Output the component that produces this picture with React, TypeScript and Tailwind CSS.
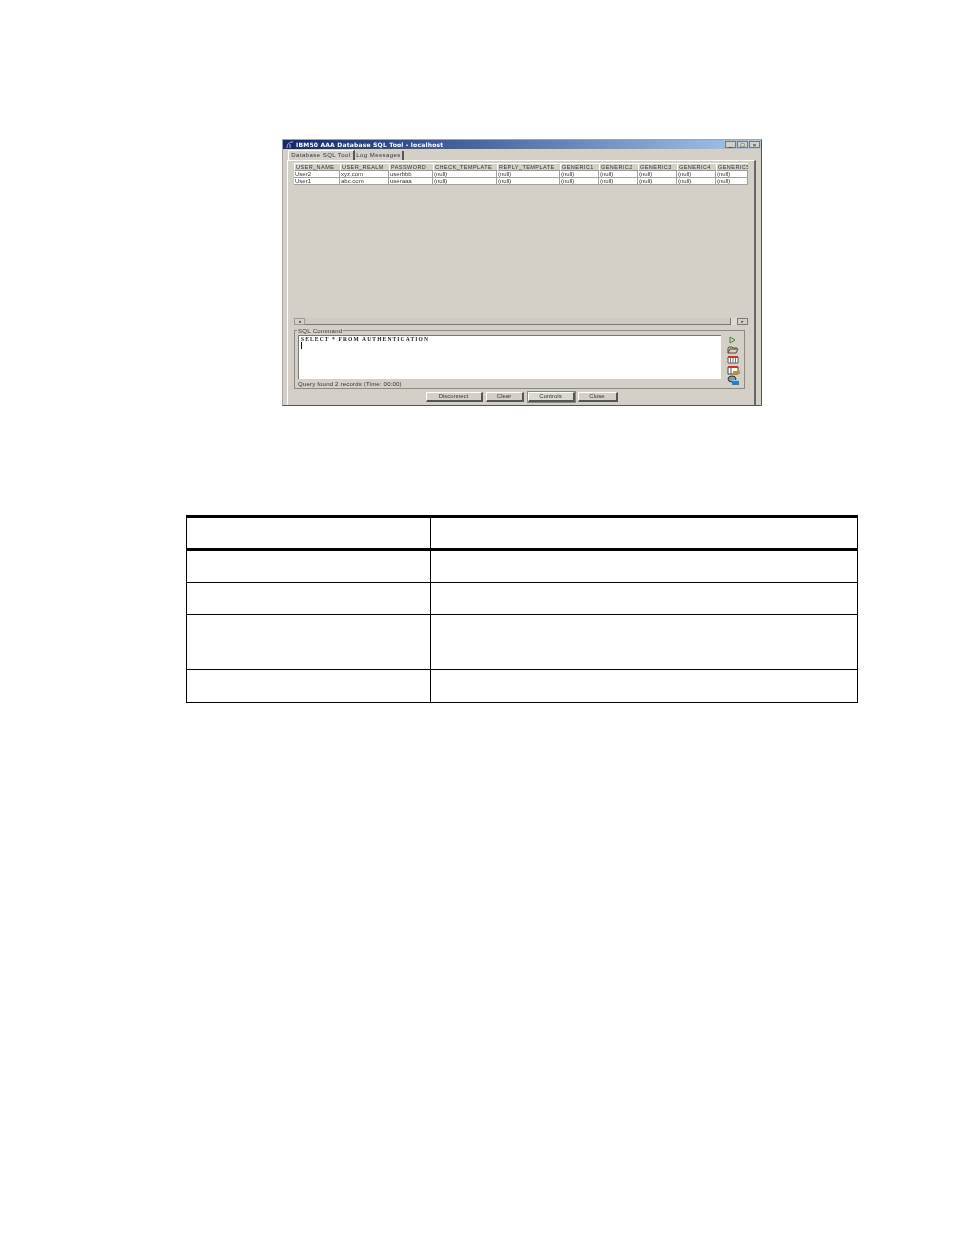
const columns = [
  { name: 'USER_NAME', width: 'w-[46px]', cells: ['User2', 'User1'] },
  { name: 'USER_REALM', width: 'w-[49px]', cells: ['xyz.com', 'abc.com'] },
  { name: 'PASSWORD', width: 'w-[44px]', cells: ['userbbb', 'useraaa'] },
  { name: 'CHECK_TEMPLATE', width: 'w-[64px]', cells: ['(null)', '(null)'] },
  { name: 'REPLY_TEMPLATE', width: 'w-[63px]', cells: ['(null)', '(null)'] },
  { name: 'GENERIC1', width: 'w-[39px]', cells: ['(null)', '(null)'] },
  { name: 'GENERIC2', width: 'w-[39px]', cells: ['(null)', '(null)'] },
  { name: 'GENERIC3', width: 'w-[39px]', cells: ['(null)', '(null)'] },
  { name: 'GENERIC4', width: 'w-[39px]', cells: ['(null)', '(null)'] },
  { name: 'GENERIC5', width: 'w-[32px]', cells: ['(null)', '(null)'] },
];

const buttons = [
  { label: 'Disconnect', width: 'w-[57px]', gap: 'mr-[3px]' },
  { label: 'Clear', width: 'w-[38px]', gap: 'mr-[4px]' },
  { label: 'Controls', width: 'w-[47px]', gap: 'mr-[3px]', active: true },
  { label: 'Close', width: 'w-[40px]', gap: '' },
];

const blankRows = ['h-[32px]', 'h-[32px]', 'h-[55px]', 'h-[33px]'];

function ToolIcons() {
  return (
    <div className="flex w-[22px] flex-col items-center">
      <svg width="12" height="10" viewBox="0 0 12 10">
        <path d="M3 2v6l5-3z" fill="#c4dcb0" stroke="#4f7a48" />
      </svg>
      <svg width="12" height="10" viewBox="0 0 12 10">
        <path d="M1 8V3l1-1h3l1 1h4v1H3L1 8h8l2-4" fill="#d8d4a8" stroke="#4a4a3a" />
      </svg>
      <svg width="12" height="10" viewBox="0 0 12 10">
        <path d="M1 2h10v6H1z" fill="#fff" stroke="#555" />
        <path d="M1 1h10v2H1z" fill="#c8342c" />
        <path d="M3.500 3v5M6 3v5M8.500 3v5" stroke="#777" />
      </svg>
      <svg width="13" height="10" viewBox="0 0 13 10">
        <path d="M1 2h10v7H1z" fill="#fff" stroke="#444" />
        <path d="M1 1h10v2H1z" fill="#c8342c" />
        <path d="M6 6h7v3H6z" fill="#b89830" />
        <path d="M4 3v6" stroke="#555" />
      </svg>
      <svg width="13" height="10" viewBox="0 0 13 10">
        <ellipse cx="5" cy="4" rx="4" ry="3" fill="#8a9a9a" stroke="#333" />
        <path d="M5 5h7v5H5z" fill="#1f82c8" />
        <path d="M5 5h7v1H5z" fill="#9ccbe8" />
      </svg>
    </div>
  );
}

function SqlWindow() {
  return (
    <div className="flex h-[267px] w-[480px] flex-col border border-[#a8a49c] border-r-[#55534e] border-b-[#55534e] bg-[#d4d0c8] font-['Liberation_Sans',sans-serif] text-[6px] leading-[7px] text-[#333] blur-[0.3px]">
      <div className="flex h-[9px] shrink-0 items-center justify-between bg-gradient-to-r from-[#14286e] to-[#a6caf0] pl-[3px] pr-[1px]">
        <div className="flex items-center gap-[2px]">
          <svg width="8" height="8" viewBox="0 0 8 8">
            <path d="M1 7C1 3 3 1 7 1M4 7V3" stroke="#c9b6e8" fill="none" />
          </svg>
          <span className="font-['DejaVu_Sans',sans-serif] text-[6px] font-bold tracking-[0.2px] text-white">IBM50 AAA Database SQL Tool - localhost</span>
        </div>
        <div className="flex gap-[1px]">
          {['_', '□', '×'].map((glyph) => (
            <span key={glyph} className="flex h-[7px] w-[11px] items-center justify-center border border-[#777] bg-[#d4d0c8] text-[6px] leading-none text-black">
              {glyph}
            </span>
          ))}
        </div>
      </div>

      <div className="flex h-[11px] shrink-0 items-end pl-[5px]">
        <div className="flex h-[10px] w-[67px] items-center justify-center border-t border-l border-white border-r-2 border-r-[#555] tracking-[0.45px]">Database SQL Tool</div>
        <div className="flex h-[9px] w-[49px] items-center justify-center border-r-2 border-r-[#555] tracking-[0.45px]">Log Messages</div>
      </div>

      <div className="ml-[4px] mr-[5px] flex min-h-0 flex-1 flex-col border-t border-l border-white border-r-2 border-r-[#666] pb-[3px] pl-[6px] pr-[6px]">
        <div className="mt-[2px] flex w-[454px]">
          {columns.map((col) => (
            <div key={col.name} className={`${col.width} shrink-0`}>
              <div className="h-[8px] overflow-hidden whitespace-nowrap border-t border-l border-white border-b border-b-[#999] pl-[1px] text-[5.500px] leading-[6px] tracking-[0.45px]">{col.name}</div>
              {col.cells.map((cell) => (
                <div key={cell} className="h-[7px] border-b border-r border-[#a0a0a0] bg-white pl-[1px] text-[6px] leading-[6px]">{cell}</div>
              ))}
            </div>
          ))}
        </div>

        <div className="flex-1" />

        <div className="flex h-[7px] w-[454px] shrink-0 items-center justify-between border-b border-[#777] bg-[#cfcbc3]">
          <span className="flex h-[7px] w-[11px] items-center justify-center border border-[#999] bg-[#d4d0c8] text-[4px] text-[#333]">◄</span>
          <div className="flex">
            <span className="h-[7px] w-[7px] border-l border-[#777] bg-[#dedad4]" />
            <span className="flex h-[7px] w-[11px] items-center justify-center border border-[#777] bg-[#d4d0c8] text-[4px] text-[#333]">►</span>
          </div>
        </div>

        <div className="relative mt-[5px] flex h-[59px] w-[451px] shrink-0 border border-[#8c8a84] pl-[3px] pt-[4px]">
          <span className="absolute -top-[3px] left-[2px] bg-[#d4d0c8] px-[1px] text-[6px] leading-[6px] tracking-[0.3px]">SQL Command</span>
          <div className="flex w-[423px] flex-col">
            <div className="h-[44px] border-t border-l border-[#777] bg-white pl-[2px] font-['Liberation_Serif',serif] text-[5.500px] font-bold leading-[6px] tracking-[1.15px] text-[#222]">
              SELECT * FROM AUTHENTICATION
              <div className="h-[7px] w-[1px] bg-black" />
            </div>
            <span className="mt-[1px] pt-[1px] text-[6px] tracking-[0.2px]">Query found 2 records (Time: 00:00)</span>
          </div>
          <div className="ml-[1px]">
            <ToolIcons />
          </div>
        </div>

        <div className="mt-[3px] flex shrink-0 justify-center pl-[1px]">
          {buttons.map((btn) => (
            <div
              key={btn.label}
              className={`flex h-[10px] ${btn.width} ${btn.gap} items-center justify-center border border-t-white border-l-white border-r-2 border-b-2 border-r-[#555] border-b-[#555] ${btn.active ? 'bg-[#dcd8d2] outline outline-[1px] outline-[#888]' : ''}`}
            >
              {btn.label}
            </div>
          ))}
        </div>
      </div>
    </div>
  );
}

export default function App() {
  return (
    <div className="min-h-[1235px] w-[954px] bg-white pt-[139px]">
      <div className="pl-[282px]">
        <SqlWindow />
      </div>

      {/* empty parameter table under the screenshot */}
      <div className="ml-[186px] mt-[109px] w-[672px] border-x border-black">
        <div className="flex h-[36px] border-y-[3px] border-black">
          <div className="w-[244px] border-r border-black" />
          <div className="flex-1" />
        </div>
        {blankRows.map((height, i) => (
          <div key={i} className={`flex ${height} border-b border-black`}>
            <div className="w-[244px] border-r border-black" />
            <div className="flex-1" />
          </div>
        ))}
      </div>
    </div>
  );
}
